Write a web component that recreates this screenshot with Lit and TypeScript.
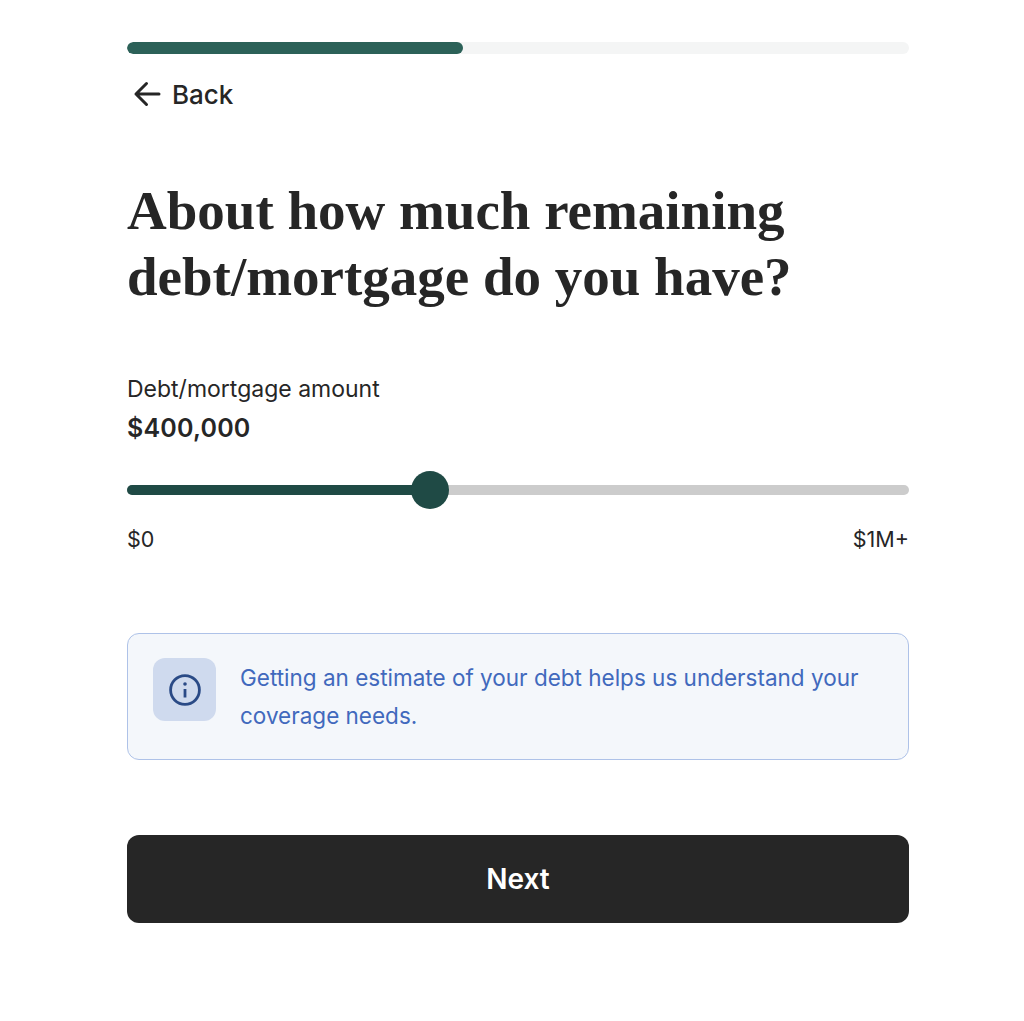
import { LitElement, html, css } from "lit";
import { customElement } from "lit/decorators.js";

@customElement("app-root")
export class AppRoot extends LitElement {
  static styles = css`
    :host { display: block; min-height: 1021px; background: #fff; font-family: Inter, "Liberation Sans", sans-serif; color: #262626; }
    .page { width: 782px; margin-left: 127px; padding-top: 42px; display: flex; flex-direction: column; }
    .progress { height: 12px; border-radius: 6px; background: #f4f5f5; overflow: hidden; }
    .progress-fill { width: 336px; height: 100%; border-radius: 6px; background: #2c6158; }
    .back { display: flex; align-items: center; gap: 11px; margin-top: 23px; padding-left: 6px; height: 34px; font-size: 26px; font-weight: 500; }
    .back svg { display: block; }
    h1 { margin: 67px 0 0; font-family: "Liberation Serif", serif; font-weight: 700; font-size: 55px; line-height: 66px; color: #262626; }
    .label { margin-top: 64px; font-size: 23px; line-height: 30px; }
    .value { margin-top: 8px; font-size: 25px; line-height: 32px; font-weight: 600; letter-spacing: 0.2px; }
    .slider { position: relative; margin-top: 41px; height: 10px; border-radius: 5px; background: #cccccc; }
    .slider-fill { width: 303px; height: 100%; border-radius: 5px; background: #1f4a45; }
    .thumb { position: absolute; left: 284px; top: -14px; width: 38px; height: 38px; border-radius: 50%; background: #1f4a45; }
    .scale { display: flex; justify-content: space-between; margin-top: 30px; font-size: 21.5px; line-height: 28px; }
    .note { display: flex; align-items: flex-start; gap: 24px; box-sizing: border-box; height: 127px; margin-top: 80px; padding: 24px 25px; border: 1px solid #aec2e8; border-radius: 12px; background: #f4f7fb; }
    .note-icon { flex: none; display: flex; align-items: center; justify-content: center; width: 63px; height: 63px; border-radius: 12px; background: #cfdaee; }
    .note-text { margin: 1px 0 0; font-size: 22.5px; line-height: 38px; color: #4169bd; }
    .next { display: block; width: 100%; height: 88px; margin-top: 75px; padding: 0; border: 0; border-radius: 12px; background: #262626; color: #fff; font: 600 28px Inter, "Liberation Sans", sans-serif; }
  `;

  render() {
    return html`
      <div class="page">
        <div class="progress"><div class="progress-fill"></div></div>
        <div class="back">
          <svg width="28" height="28" viewBox="0 0 28 28" fill="none" stroke="#262626" stroke-width="3" stroke-linecap="round" stroke-linejoin="round">
            <path d="M26 14H3M13.5 3.5 3 14 13.5 24.5" />
          </svg>
          <span>Back</span>
        </div>
        <h1>About how much remaining<br />debt/mortgage do you have?</h1>
        <div class="label">Debt/mortgage amount</div>
        <div class="value">$400,000</div>
        <div class="slider">
          <div class="slider-fill"></div>
          <div class="thumb"></div>
        </div>
        <div class="scale"><span>$0</span><span>$1M+</span></div>
        <div class="note">
          <div class="note-icon">
            <svg width="32" height="32" viewBox="0 0 32 32" fill="none" stroke="#2a4a86" stroke-width="2.8">
              <circle cx="16" cy="16" r="14.4" />
              <path d="M16 15V23.5" />
              <circle cx="16" cy="10" r="1.8" fill="#2a4a86" stroke="none" />
            </svg>
          </div>
          <p class="note-text">Getting an estimate of your debt helps us understand your coverage needs.</p>
        </div>
        <button class="next">Next</button>
      </div>
    `;
  }
}
